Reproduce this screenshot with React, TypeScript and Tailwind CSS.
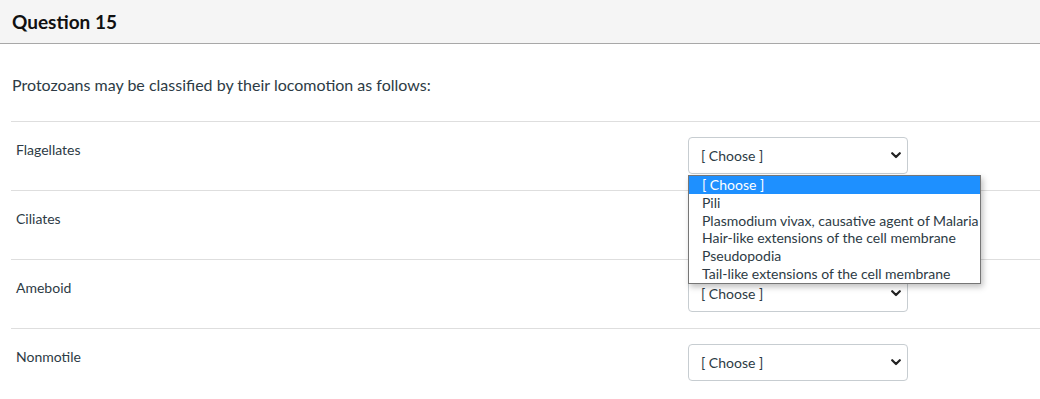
const ROWS = ['Flagellates', 'Ciliates', 'Ameboid', 'Nonmotile']
const OPTIONS = [
  '[ Choose ]',
  'Pili',
  'Plasmodium vivax, causative agent of Malaria',
  'Hair-like extensions of the cell membrane',
  'Pseudopodia',
  'Tail-like extensions of the cell membrane',
]

function Chevron() {
  return (
    <svg width="10" height="7" viewBox="0 0 10 7" className="text-[#222]">
      <path d="M1.2 1.2 L5 5 L8.8 1.2" fill="none" stroke="currentColor" strokeWidth="2.2" strokeLinecap="round" strokeLinejoin="round" />
    </svg>
  )
}

function FakeSelect() {
  return (
    <div className="w-[220px] h-[37px] border border-[#c7cdd1] rounded-[4px] bg-white flex items-center justify-between pl-[12px] pr-[6px] text-[14px] text-[#2d3b45]">
      <span>[ Choose ]</span>
      <Chevron />
    </div>
  )
}

export default function App() {
  return (
    <div className="relative w-[1040px] h-[399px] bg-white overflow-hidden text-[#2d3b45]" style={{ fontFamily: 'Lato, "Noto Sans", sans-serif' }}>
      {/* Header */}
      <div className="h-[44px] bg-[#f5f5f5] border-b border-[#a8a8a8] px-3 flex items-center">
        <h2 className="text-[19px] font-bold text-[#111] leading-none">Question 15</h2>
      </div>

      <div className="pl-[11px]">
        <p className="pt-[29px] pb-[24px] pl-[1px] text-[16px] leading-[24px]">
          Protozoans may be classified by their locomotion as follows:
        </p>

        {ROWS.map(label => (
          <div key={label} className="h-[69px] border-t border-[#dedede] flex items-start justify-between">
            <div className="pl-[5px] pt-[19px] text-[14px] leading-[18px]">{label}</div>
            <div className="mt-[15px] mr-[132px]">
              <FakeSelect />
            </div>
          </div>
        ))}
      </div>

      {/* Open dropdown list */}
      <div className="absolute left-[688px] top-[175px] w-[293px] border border-[#767676] bg-white shadow-[2px_3px_6px_rgba(0,0,0,0.25)] text-[14px] leading-[17.8px] text-[#2d3b45]">
        {OPTIONS.map((o, i) => (
          <div key={o} className={`pl-[13px] pr-1 whitespace-nowrap ${i === 0 ? 'bg-[#1e90ff] text-white' : ''}`}>{o}</div>
        ))}
      </div>
    </div>
  )
}
